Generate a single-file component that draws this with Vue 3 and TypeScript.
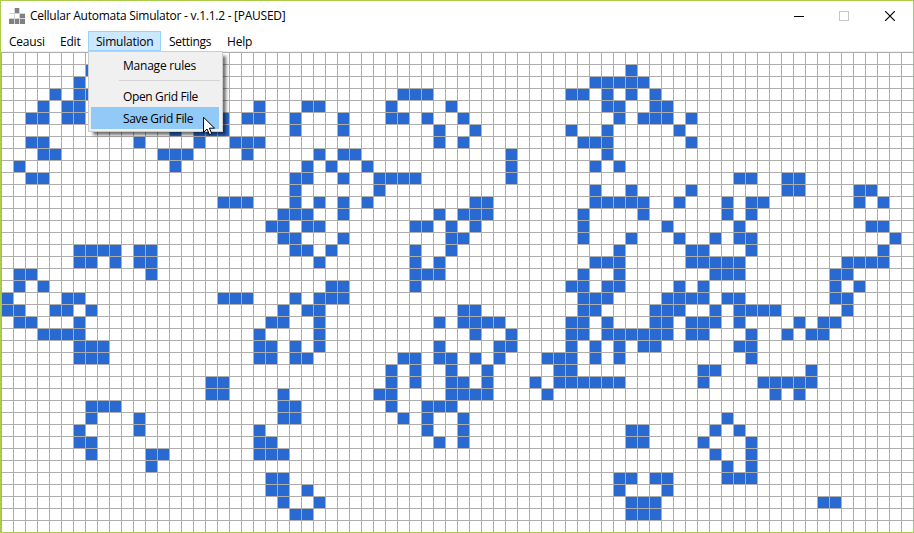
<script setup lang="ts">
type Run = [start: number, end: number]

const CELL = 12
const COLS = 76
const ROWS = 40

// Live cells, one string per row: single columns or inclusive column ranges
const rows: string[] = [
  '',
  '7 52',
  '6 49-53',
  '4 6-7 33-35 47-48 50 52 54',
  '3 5-6 21 25-26 32 37 50-51 54-55',
  '2-3 5-6 18 20-21 24 28 32-33 35 38 51 53-55 57',
  '14 16-18 24 28 36 39 47 50 56',
  '2-3 11 16 19-21 36 38 48-50 57',
  '3-4 13-15 20 26 28-29 42 50',
  '1 14 25 27 30 42 49 51',
  '2-3 24-25 28 31-34 42 61-62 65-66',
  '24 31 49 52 57 65-66 71-72',
  '18-20 24 26 28 30 39-40 49-53 56 60 62-63 71 73',
  '23-25 28 36 38-40 48 53 60 62',
  '22-23 25-26 34-35 37 39 48 55 61 72-73',
  '23-24 28 37-38 48 52 56 59 61-62 74',
  '6-9 11-12 24-25 27 34 37 51 57-58 62 73',
  '6-7 9 11-12 26 34 36 49-51 57-61 70-73',
  '1-2 12 34-36 48 51 59-61 69-70',
  '1 3 27-28 34 47-48 50-51 56 58 69 71',
  '0 5-6 18-20 24 26-28 48-50 55-58 60-61 69-70',
  '0-1 4-5 7 23 25-26 38-39 48-49 54-56 59 61-64 70',
  '1-2 6 22-23 26 36 38-41 47-48 50 54-55 57-59 61 66 68-69',
  '3-6 21 26 39 42 47-48 50-55 57-58 62 65 67-68',
  '6-8 21-22 24 26 36 41-42 47 49 51 53-54 61-62',
  '6-8 21-22 24-25 33-34 36-37 39 41 45-47 49 51 62',
  '32 34 37 40 46-47 58-59 67',
  '17-18 32 34 37-38 40 44 46-51 58 63-67',
  '17-18 23 31-32 37-40 45 64 66',
  '7-9 23-24 32 35-37',
  '7 11 23-24 33 35 38 60',
  '6 11 21 35 38 52-53 59 61',
  '6-7 21-22 36 38 52-53 58 62',
  '7 12-13 21-23 59 62',
  '12 60 62',
  '22-23 51-52 54-55 60-62',
  '22-23 25 51 55',
  '23 26 52-54 68-69',
  '24-25 52-54',
  '',
]

const parseRun = (part: string): Run => {
  const [start, end = start] = part.split('-').map(Number)
  return [start, end]
}

const cells = rows.flatMap((row, y) =>
  row.split(' ').filter(Boolean).map(parseRun).flatMap(([start, end]) =>
    Array.from({ length: end - start + 1 }, (_, i) => ({ x: start + i, y })),
  ),
)

const columnLines = Array.from({ length: COLS }, (_, i) => i * CELL)
const rowLines = Array.from({ length: ROWS }, (_, i) => i * CELL)
</script>

<template>
  <div class="window">
    <header class="titlebar">
      <svg class="app-icon" width="16" height="16" viewBox="0 0 16 16" shape-rendering="crispEdges">
        <path fill="#d6d6d6" d="M0 0h16v16H0z" />
        <path fill="#fff" d="M0 0h5v5H0zM11 0h5v5h-5zM0 6h5v4H0zM6 6h4v4H6z" />
        <path fill="#808080" d="M6 0h4v5H6zM11 6h5v4h-5zM0 11h5v5H0zM6 11h4v5H6zM11 11h5v5h-5z" />
      </svg>
      <h1 class="title">Cellular Automata Simulator - v.1.1.2 - [PAUSED]</h1>
      <div class="controls">
        <svg width="10" height="10" viewBox="0 0 10 10" shape-rendering="crispEdges">
          <path fill="#000" d="M0 5h10v1H0z" />
        </svg>
        <svg width="10" height="10" viewBox="0 0 10 10" shape-rendering="crispEdges">
          <path fill="none" stroke="#c8c8c8" d="M.5.5h9v9h-9z" />
        </svg>
        <svg width="10" height="10" viewBox="0 0 10 10">
          <path fill="none" stroke="#000" stroke-width="1.15" d="M0 0l10 10M10 0L0 10" />
        </svg>
      </div>
    </header>

    <nav class="menubar">
      <span class="entry ceausi">Ceausi</span>
      <span class="entry edit">Edit</span>
      <div class="entry simulation">
        Simulation
        <div class="dropdown">
          <div class="item">Manage rules</div>
          <div class="separator"></div>
          <div class="item file">Open Grid File</div>
          <div class="item file selected">Save Grid File</div>
        </div>
      </div>
      <span class="entry settings">Settings</span>
      <span class="entry help">Help</span>
    </nav>

    <svg class="board" width="912" height="480" viewBox="0 0 912 480" shape-rendering="crispEdges">
      <rect v-for="c in cells" :key="`${c.x}-${c.y}`" :x="c.x * CELL + 1" :y="c.y * CELL + 1" width="11" height="11" fill="#2869d2" />
      <rect v-for="x in columnLines" :key="`c${x}`" :x="x" y="0" width="1" height="480" fill="#adadad" />
      <rect v-for="y in rowLines" :key="`r${y}`" x="0" :y="y" width="912" height="1" fill="#adadad" />
    </svg>

    <svg class="cursor" width="13" height="20" viewBox="0 0 13 20">
      <path fill="#fff" stroke="#000" stroke-width="1" d="M.5 1.2v15.2l3.5-3.4 2.5 5.7 2.3-1L6.4 12.2h5.1z" />
    </svg>
  </div>
</template>

<style>
body {
  margin: 0;
  overflow: hidden;
}
</style>

<style scoped>
.window {
  position: relative;
  box-sizing: border-box;
  display: flex;
  flex-direction: column;
  width: 914px;
  height: 533px;
  border: 1px solid #aacd4c;
  background: #fff;
  color: #000;
  font-family: "Open Sans", "Noto Sans", sans-serif;
  font-size: 12px;
  white-space: nowrap;
}
.titlebar {
  display: flex;
  align-items: center;
  height: 30px;
  flex: none;
  padding-left: 8px;
}
.app-icon {
  margin-right: 5px;
}
.title {
  margin: 0;
  font-size: 12px;
  font-weight: 400;
  line-height: 30px;
  letter-spacing: -0.25px;
}
.controls {
  display: flex;
  gap: 35px;
  margin-left: auto;
  padding-right: 18px;
}
.controls svg:nth-child(2) {
  margin-right: 1px;
}
.menubar {
  display: flex;
  flex: none;
  height: 20px;
  border-bottom: 1px solid #f0f0f0;
  line-height: 22px;
}
.entry {
  box-sizing: border-box;
  padding-left: 8px;
  letter-spacing: -0.22px;
}
.ceausi {
  width: 51px;
}
.edit {
  width: 36px;
}
.simulation {
  position: relative;
  width: 73px;
  height: 20px;
  padding-left: 7px;
  border: 1px solid #99d1ff;
  background: #cce8ff;
  line-height: 20px;
}
.settings {
  width: 58px;
  letter-spacing: -0.3px;
}
.dropdown {
  position: absolute;
  z-index: 1;
  top: 19px;
  left: -1px;
  box-sizing: border-box;
  width: 135px;
  height: 81px;
  padding: 2px;
  border: 1px solid #ccc;
  background: #f0f0f0;
  box-shadow: 4px 4px 3px -1px rgba(0, 0, 0, 0.55);
}
.item {
  height: 22px;
  padding-left: 32px;
  line-height: 24px;
}
.file {
  letter-spacing: -0.36px;
}
.separator {
  height: 1px;
  margin: 4px 0 4px 28px;
  background: #d4d4d4;
}
.selected {
  width: 96px;
  background: #91c9f7;
}
.board {
  display: block;
  flex: none;
}
.cursor {
  position: absolute;
  z-index: 2;
  left: 202px;
  top: 115px;
}
</style>
